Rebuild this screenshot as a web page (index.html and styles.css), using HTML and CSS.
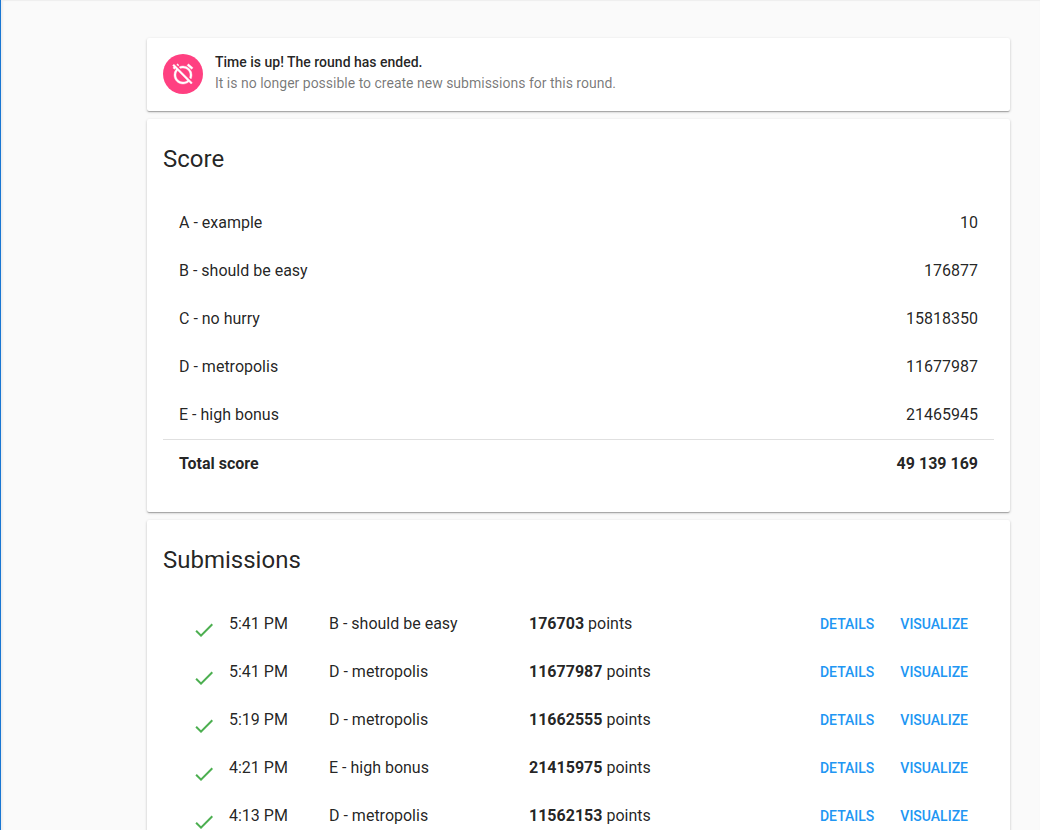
FILE: index.html
```
<!DOCTYPE html>
<html lang="en">
<head>
<meta charset="utf-8">
<title>Round results</title>
<link rel="stylesheet" href="styles.css">
</head>
<body>
<svg class="sprite" aria-hidden="true">
  <symbol id="done" viewBox="0 0 24 24"><path d="M9 16.2L4.8 12l-1.4 1.4L9 19 21 7l-1.4-1.4z"/></symbol>
</svg>
<main class="page">
  <section class="card notice">
    <span class="avatar">
      <svg viewBox="0 0 24 24" aria-hidden="true"><path d="M12 6c3.87 0 7 3.13 7 7 0 .84-.16 1.65-.43 2.4l1.52 1.52c.58-1.19.91-2.51.91-3.92a9 9 0 0 0-9-9c-1.41 0-2.73.33-3.92.91L9.6 6.43C10.35 6.16 11.16 6 12 6zm10-.28l-4.6-3.86-1.29 1.53 4.6 3.86L22 5.72zM2.92 2.29L1.65 3.57 2.98 4.9l-1.11.93 1.42 1.42 1.11-.94.8.8A8.964 8.964 0 0 0 3 13c0 4.97 4.02 9 9 9 2.25 0 4.31-.83 5.89-2.2l2.2 2.2 1.27-1.27L3.89 3.27l-.97-.98zm13.55 16.1C15.26 19.39 13.7 20 12 20c-3.87 0-7-3.13-7-7 0-1.7.61-3.26 1.61-4.47l9.86 9.86zM8.02 3.28L6.6 1.86l-.86.71 1.42 1.42.86-.71z" stroke="#fff" stroke-width=".4"/></svg>
    </span>
    <div class="notice-text">
      <p class="notice-title">Time is up! The round has ended.</p>
      <p class="notice-detail">It is no longer possible to create new submissions for this round.</p>
    </div>
  </section>

  <section class="card">
    <h2 class="card-title">Score</h2>
    <table class="score">
      <tbody>
        <tr><th scope="row">A - example</th><td>10</td></tr>
        <tr><th scope="row">B - should be easy</th><td>176877</td></tr>
        <tr><th scope="row">C - no hurry</th><td>15818350</td></tr>
        <tr><th scope="row">D - metropolis</th><td>11677987</td></tr>
        <tr><th scope="row">E - high bonus</th><td>21465945</td></tr>
      </tbody>
      <tfoot>
        <tr><th scope="row">Total score</th><td>49 139 169</td></tr>
      </tfoot>
    </table>
  </section>

  <section class="card">
    <h2 class="card-title">Submissions</h2>
    <ul class="submissions">
      <li class="submission">
        <svg class="check" role="img" aria-label="Judged"><use href="#done"/></svg>
        <span>5:41 PM</span><span>B - should be easy</span><span><b>176703</b> points</span>
        <span class="actions"><button class="action" type="button">DETAILS</button><button class="action" type="button">VISUALIZE</button></span>
      </li>
      <li class="submission">
        <svg class="check" role="img" aria-label="Judged"><use href="#done"/></svg>
        <span>5:41 PM</span><span>D - metropolis</span><span><b>11677987</b> points</span>
        <span class="actions"><button class="action" type="button">DETAILS</button><button class="action" type="button">VISUALIZE</button></span>
      </li>
      <li class="submission">
        <svg class="check" role="img" aria-label="Judged"><use href="#done"/></svg>
        <span>5:19 PM</span><span>D - metropolis</span><span><b>11662555</b> points</span>
        <span class="actions"><button class="action" type="button">DETAILS</button><button class="action" type="button">VISUALIZE</button></span>
      </li>
      <li class="submission">
        <svg class="check" role="img" aria-label="Judged"><use href="#done"/></svg>
        <span>4:21 PM</span><span>E - high bonus</span><span><b>21415975</b> points</span>
        <span class="actions"><button class="action" type="button">DETAILS</button><button class="action" type="button">VISUALIZE</button></span>
      </li>
      <li class="submission">
        <svg class="check" role="img" aria-label="Judged"><use href="#done"/></svg>
        <span>4:13 PM</span><span>D - metropolis</span><span><b>11562153</b> points</span>
        <span class="actions"><button class="action" type="button">DETAILS</button><button class="action" type="button">VISUALIZE</button></span>
      </li>
    </ul>
  </section>
</main>
</body>
</html>
```
FILE: styles.css
```
* { box-sizing: border-box; }
body {
  min-height: 100vh;
  margin: 0;
  border-left: 1px solid #1976d2;
  background: #fafafa;
  box-shadow: inset 0 1px 1px #eee, inset 2px 0 2px #eee;
  color: rgba(0, 0, 0, 0.87);
  font: 16px/24px Roboto, sans-serif;
}
.sprite { display: none; }
.page {
  display: flex;
  flex-direction: column;
  gap: 8px;
  padding: 38px 30px 38px 146px;
}
.card {
  padding: 16px 16px 24px;
  border-radius: 2px;
  background: #fff;
  box-shadow: 0 1px 3px 0 rgba(0, 0, 0, 0.2), 0 1px 1px 0 rgba(0, 0, 0, 0.14), 0 2px 1px -1px rgba(0, 0, 0, 0.12);
}
.notice {
  display: flex;
  gap: 12px;
  padding: 14px 16px 17px;
  font-size: 14px;
  line-height: 21px;
}
.notice p { margin: 0; }
.notice-title { font-weight: 500; }
.notice-detail { color: rgba(0, 0, 0, 0.54); }
.avatar {
  display: grid;
  place-items: center;
  width: 40px;
  height: 40px;
  margin-top: 2px;
  border-radius: 50%;
  background: #ff4081;
}
.avatar svg { width: 24px; height: 24px; fill: #fff; }
.card-title {
  margin: 0 0 16px;
  font-size: 24px;
  font-weight: 400;
  line-height: 48px;
}
.score { width: 100%; border-collapse: collapse; }
.score th, .score td { height: 48px; padding: 0 16px; }
.score th { font-weight: 400; text-align: left; }
.score td { text-align: right; }
.score tfoot th, .score tfoot td { height: 49px; font-weight: 700; }
.score tfoot { border-top: 1px solid rgba(0, 0, 0, 0.12); }
.submissions { margin: 0; padding: 0 16px; list-style: none; }
.submission {
  display: grid;
  grid-template-columns: 25px 88px 188px 1fr auto;
  column-gap: 12px;
  align-items: center;
  height: 48px;
  padding: 0 4px 0 13px;
}
.check { width: 24px; height: 36px; padding-top: 12px; fill: #4caf50; }
.actions { display: flex; gap: 14px; }
.action {
  height: 36px;
  padding: 0 6px;
  border: 0;
  background: none;
  color: #2196f3;
  font: 500 14px/36px Roboto, sans-serif;
  cursor: pointer;
}
```
